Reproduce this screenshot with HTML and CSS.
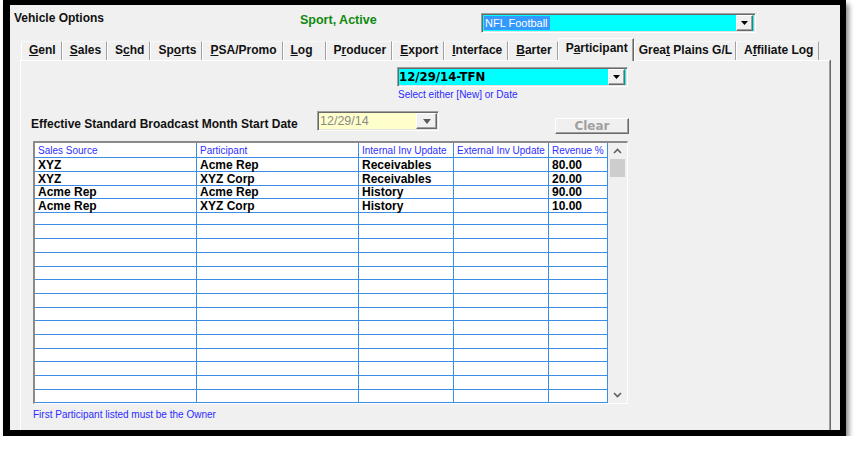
FILE: index.html
```html
<!DOCTYPE html>
<html>
<head>
<meta charset="utf-8">
<link rel="stylesheet" href="styles.css">
</head>
<body>
<div class="window">
  <div class="topbar">
    <div class="title">Vehicle Options</div>
    <div class="status">Sport, Active</div>
    <div class="combo combo-vehicle">
      <span class="combo-text"><span class="sel">NFL Football</span></span>
      <span class="combo-btn"><svg width="7" height="4" viewBox="0 0 7 4"><path d="M0 0h7L3.5 4z" fill="#000"/></svg></span>
    </div>
  </div>
  <div class="tabs">
    <div class="tab"><u>G</u>enl</div>
    <div class="tab"><u>S</u>ales</div>
    <div class="tab">S<u>c</u>hd</div>
    <div class="tab">Sp<u>o</u>rts</div>
    <div class="tab"><u>P</u>SA/Promo</div>
    <div class="tab tab-log"><u>L</u>og</div>
    <div class="tab">P<u>r</u>oducer</div>
    <div class="tab"><u>E</u>xport</div>
    <div class="tab"><u>I</u>nterface</div>
    <div class="tab"><u>B</u>arter</div>
    <div class="tab tab-active">P<u>a</u>rticipant</div>
    <div class="tab tab-tight">Grea<u>t</u> Plains G/L</div>
    <div class="tab">A<u>f</u>filiate Log</div>
  </div>
  <div class="panel">
    <div class="combo combo-period">
      <span class="combo-text period-text">12/29/14-TFN</span>
      <span class="combo-btn"><svg width="7" height="4" viewBox="0 0 7 4"><path d="M0 0h7L3.5 4z" fill="#000"/></svg></span>
    </div>
    <div class="hint">Select either [New] or Date</div>
    <div class="eff-row">
      <div class="eff-label">Effective Standard Broadcast Month Start Date</div>
      <div class="datebox">
        <span class="date-text">12/29/14</span>
        <span class="date-btn"><svg width="8" height="5" viewBox="0 0 8 5"><path d="M0 0h8L4 5z" fill="#5a5a5a"/></svg></span>
      </div>
      <button class="clear-btn" disabled>Clear</button>
    </div>
    <div class="grid">
      <div class="table">
        <div class="row head">
          <span class="cell">Sales Source</span><span class="cell">Participant</span><span class="cell">Internal Inv Update</span><span class="cell">External Inv Update</span><span class="cell">Revenue %</span>
        </div>
        <div class="row"><span class="cell">XYZ</span><span class="cell">Acme Rep</span><span class="cell">Receivables</span><span class="cell"></span><span class="cell">80.00</span></div>
        <div class="row"><span class="cell">XYZ</span><span class="cell">XYZ Corp</span><span class="cell">Receivables</span><span class="cell"></span><span class="cell">20.00</span></div>
        <div class="row"><span class="cell">Acme Rep</span><span class="cell">Acme Rep</span><span class="cell">History</span><span class="cell"></span><span class="cell">90.00</span></div>
        <div class="row"><span class="cell">Acme Rep</span><span class="cell">XYZ Corp</span><span class="cell">History</span><span class="cell"></span><span class="cell">10.00</span></div>
        <div class="row"><span class="cell"></span><span class="cell"></span><span class="cell"></span><span class="cell"></span><span class="cell"></span></div>
        <div class="row"><span class="cell"></span><span class="cell"></span><span class="cell"></span><span class="cell"></span><span class="cell"></span></div>
        <div class="row"><span class="cell"></span><span class="cell"></span><span class="cell"></span><span class="cell"></span><span class="cell"></span></div>
        <div class="row"><span class="cell"></span><span class="cell"></span><span class="cell"></span><span class="cell"></span><span class="cell"></span></div>
        <div class="row"><span class="cell"></span><span class="cell"></span><span class="cell"></span><span class="cell"></span><span class="cell"></span></div>
        <div class="row"><span class="cell"></span><span class="cell"></span><span class="cell"></span><span class="cell"></span><span class="cell"></span></div>
        <div class="row"><span class="cell"></span><span class="cell"></span><span class="cell"></span><span class="cell"></span><span class="cell"></span></div>
        <div class="row"><span class="cell"></span><span class="cell"></span><span class="cell"></span><span class="cell"></span><span class="cell"></span></div>
        <div class="row"><span class="cell"></span><span class="cell"></span><span class="cell"></span><span class="cell"></span><span class="cell"></span></div>
        <div class="row"><span class="cell"></span><span class="cell"></span><span class="cell"></span><span class="cell"></span><span class="cell"></span></div>
        <div class="row"><span class="cell"></span><span class="cell"></span><span class="cell"></span><span class="cell"></span><span class="cell"></span></div>
        <div class="row"><span class="cell"></span><span class="cell"></span><span class="cell"></span><span class="cell"></span><span class="cell"></span></div>
        <div class="row"><span class="cell"></span><span class="cell"></span><span class="cell"></span><span class="cell"></span><span class="cell"></span></div>
        <div class="row"><span class="cell"></span><span class="cell"></span><span class="cell"></span><span class="cell"></span><span class="cell"></span></div>
      </div>
      <div class="scrollbar">
        <span class="sb-arrow"><svg width="9" height="6" viewBox="0 0 9 6"><path d="M1 5 4.5 1.5 8 5" fill="none" stroke="#606060" stroke-width="1.6"/></svg></span>
        <span class="sb-thumb"></span>
        <span class="sb-track"></span>
        <span class="sb-arrow"><svg width="9" height="6" viewBox="0 0 9 6"><path d="M1 1 4.5 4.5 8 1" fill="none" stroke="#606060" stroke-width="1.6"/></svg></span>
      </div>
    </div>
    <div class="footnote">First Participant listed must be the Owner</div>
  </div>
</div>
</body>
</html>
```

FILE: styles.css
```css
html, body {
  margin: 0;
  padding: 0;
  background: #fff;
}

.window {
  width: 830px;
  height: 425px;
  margin-left: 3px;
  border-style: solid;
  border-color: #000;
  border-width: 5px 6px 6px 7px;
  background: #f0f0f0;
  box-shadow: 3px 4px 5px rgba(0, 0, 0, 0.45);
  overflow: hidden;
  font-family: "Liberation Sans", Arial, sans-serif;
  color: #000;
}

/* top bar */
.topbar {
  display: flex;
  height: 33px;
}

.title {
  width: 286px;
  margin-left: 4px;
  margin-top: 6px;
  font-size: 12px;
  font-weight: bold;
  line-height: 14px;
  color: #111;
}

.status {
  width: 181px;
  margin-top: 8px;
  font-size: 12.5px;
  font-weight: bold;
  line-height: 15px;
  color: #108a10;
}

.combo {
  display: flex;
  box-sizing: border-box;
  height: 20px;
  padding: 1px 2px;
  border: 1px solid;
  border-color: #a0a0a0 #fff #fff #a0a0a0;
  box-shadow: inset 1px 1px #696969, inset -1px -1px #e3e3e3;
  background: #00ffff;
}

.combo-vehicle {
  width: 275px;
  margin-top: 8px;
}

.combo-text {
  display: flex;
  align-items: flex-start;
  flex: 1;
  overflow: hidden;
  white-space: nowrap;
}

.sel {
  display: block;
  height: 14px;
  margin: 1px 0 0 -1px;
  padding: 0 2px;
  font-size: 11px;
  line-height: 14px;
  color: #fff;
  background: #3399ff;
}

.combo-btn {
  box-sizing: border-box;
  width: 17px;
  height: 16px;
  display: flex;
  align-items: center;
  justify-content: center;
  background: #f0f0f0;
  border: 1px solid;
  border-color: #fff #696969 #696969 #fff;
  box-shadow: inset -1px -1px #a0a0a0;
}

/* tabs */
.tabs {
  display: flex;
  align-items: flex-end;
  height: 22px;
  padding-left: 11px;
}

.tab {
  height: 19px;
  box-sizing: border-box;
  padding: 0 5px 0 7px;
  border-left: 1px solid #fff;
  border-right: 1px solid #a0a0a0;
  border-top: 1px solid #f8f8f8;
  font-size: 12px;
  font-weight: bold;
  line-height: 17px;
  white-space: nowrap;
  color: #111;
}

.tab u {
  text-decoration-thickness: 1px;
}

.tab-log {
  padding-right: 12px;
}

.tab-tight {
  padding: 0 3px 0 4px;
}

.tab-active {
  position: relative;
  z-index: 1;
  height: 23px;
  margin-bottom: -1px;
  padding-top: 2px;
  line-height: 14px;
  background: #f0f0f0;
  border-top: 1px solid #fff;
  border-right: 1px solid #696969;
  box-shadow: inset -1px 0 #a0a0a0;
}

/* panel */
.panel {
  width: 808px;
  height: 380px;
  margin-left: 10px;
  border-top: 1px solid #fff;
  border-left: 1px solid #fff;
  border-right: 1px solid #a0a0a0;
  box-shadow: 1px 0 #696969;
}

.combo-period {
  width: 231px;
  margin-left: 376px;
  margin-top: 6px;
  padding-left: 1px;
}

.period-text {
  font-family: "DejaVu Sans", sans-serif;
  font-weight: bold;
  font-size: 11.7px;
  line-height: 16px;
}

.hint {
  margin-left: 377px;
  margin-top: 2px;
  font-size: 10px;
  line-height: 12px;
  color: #2b2bff;
}

.eff-row {
  display: flex;
  align-items: flex-start;
  height: 23px;
  margin-top: 10px;
}

.eff-label {
  width: 286px;
  margin-left: 10px;
  margin-top: 6px;
  font-size: 12px;
  font-weight: bold;
  line-height: 14px;
  color: #111;
  white-space: nowrap;
}

.datebox {
  display: flex;
  box-sizing: border-box;
  width: 122px;
  height: 20px;
  padding: 1px 1px 1px 2px;
  border: 1px solid;
  border-color: #a0a0a0 #fff #fff #a0a0a0;
  box-shadow: inset 1px 1px #696969, inset -1px -1px #e3e3e3;
  background: #ffffcc;
}

.date-text {
  flex: 1;
  font-size: 12.5px;
  line-height: 16px;
  color: #8a8a8a;
}

.date-btn {
  box-sizing: border-box;
  width: 21px;
  height: 16px;
  display: flex;
  align-items: center;
  justify-content: center;
  background: #f0f0f0;
  border: 1px solid;
  border-color: #fff #696969 #696969 #fff;
  box-shadow: inset -1px -1px #a0a0a0;
}

.clear-btn {
  box-sizing: border-box;
  width: 74px;
  height: 16px;
  margin: 7px 0 0 116px;
  padding: 0;
  border: 1px solid;
  border-color: #fff #696969 #696969 #fff;
  box-shadow: inset -1px -1px #a0a0a0;
  background: #f0f0f0;
  font-family: "DejaVu Sans", sans-serif;
  font-weight: bold;
  font-size: 12px;
  line-height: 14px;
  color: #a0a0a0;
}

/* grid */
.grid {
  display: flex;
  width: 592px;
  height: 260px;
  margin-left: 12px;
  margin-top: 7px;
  border-style: solid;
  border-width: 2px 1px 1px 2px;
  border-color: #8a8a8a #fff #fff #8a8a8a;
  background: #fff;
  overflow: hidden;
}

.table {
  width: 573px;
}

.row {
  display: grid;
  grid-template-columns: 162px 162px 95px 95px 59px;
  height: 13.7px;
}

.cell {
  box-sizing: border-box;
  padding: 2px 0 0 3px;
  border-right: 1px solid #3a8ee6;
  border-bottom: 1px solid #3a8ee6;
  font-size: 12px;
  font-weight: bold;
  line-height: 12px;
  white-space: nowrap;
  overflow: visible;
}

.row.head {
  height: 14px;
}

.row.head .cell {
  font-size: 10px;
  font-weight: normal;
  color: #3030ff;
  line-height: 12px;
}

.scrollbar {
  display: flex;
  flex-direction: column;
  align-items: center;
  width: 19px;
  background: #f0f0f0;
}

.sb-arrow {
  display: flex;
  align-items: center;
  justify-content: center;
  width: 19px;
  height: 16px;
}

.sb-thumb {
  width: 15px;
  height: 18px;
  background: #cdcdcd;
}

.sb-track {
  flex: 1;
}

.footnote {
  margin-left: 12px;
  margin-top: 4px;
  font-size: 10px;
  line-height: 14px;
  color: #2b2bff;
}
```
